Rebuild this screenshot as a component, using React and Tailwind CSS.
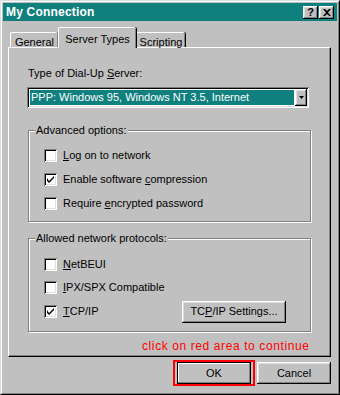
import React from "react";

const raised =
  "shadow-[inset_-1px_-1px_0_#000,inset_1px_1px_0_#fff,inset_-2px_-2px_0_#808080,inset_2px_2px_0_#dfdfdf]";
const sunken =
  "shadow-[inset_1px_1px_0_#808080,inset_-1px_-1px_0_#fff,inset_2px_2px_0_#000,inset_-2px_-2px_0_#dfdfdf]";

const Check = ({ checked, children }) => (
  <div className="flex items-center h-[13px]">
    <div className={`w-[13px] h-[13px] bg-white shrink-0 ${sunken} flex items-center justify-center`}>
      {checked && (
        <svg width="13" height="13" viewBox="0 0 13 13">
          <path d="M3 5v3l2 2 5-5V3L5 8z" fill="#000" />
        </svg>
      )}
    </div>
    <span className="ml-[6px] leading-[13px]">{children}</span>
  </div>
);

const Group = ({ label, className, children }) => (
  <div
    className={`relative ml-[19px] w-[283px] border border-[#808080] shadow-[inset_1px_1px_0_#fff,1px_1px_0_#fff] ${className}`}
  >
    <span className="absolute -top-[7px] left-[6px] bg-[#c0c0c0] px-[1px] leading-[13px]">
      {label}
    </span>
    {children}
  </div>
);

const Tab = ({ active, children, className }) => (
  <div
    className={`relative flex justify-center bg-[#c0c0c0] border-t border-l border-white rounded-t-[2px] shadow-[inset_-1px_0_0_#808080,1px_0_0_#000] ${
      active ? "h-[21px] pt-[3px] z-10 -mb-[1px]" : "h-[15px] pt-[1px]"
    } ${className}`}
  >
    {children}
  </div>
);

export default function App() {
  return (
    <div className="w-[340px] h-[395px] bg-[#c0c0c0] border border-t-[#dfdfdf] border-l-[#dfdfdf] border-r-black border-b-black text-[11px] text-black font-['Liberation_Sans',Arial,sans-serif]">
      <div className="h-full border border-t-white border-l-white border-r-[#808080] border-b-[#808080] p-[1px]">
        <div className="h-[18px] bg-[#0f807d] flex items-center pl-[3px] pr-[3px]">
          <span className="text-white font-bold text-[12px] tracking-[0.2px]">My Connection</span>
          <div className="ml-auto flex gap-[1px]">
            <div className={`w-[15px] h-[13px] bg-[#c0c0c0] ${raised} flex items-center justify-center font-bold text-[11px] leading-none`}>
              ?
            </div>
            <div className={`w-[15px] h-[13px] bg-[#c0c0c0] ${raised} flex items-center justify-center`}>
              <svg width="8" height="7" viewBox="0 0 8 7">
                <path d="M0 0h2l2 2 2-2h2L5 3.5 8 7H6L4 5 2 7H0l3-3.5z" fill="#000" />
              </svg>
            </div>
          </div>
        </div>

        <div className="flex items-end ml-[7px] mt-[7px] h-[19px]">
          <Tab className="w-[48px]">General</Tab>
          <Tab active className="w-[78px]">
            Server Types
          </Tab>
          <Tab className="w-[49px]">Scripting</Tab>
        </div>

        <div className="ml-[5px] w-[323px] h-[310px] border-t border-l border-white border-r border-b border-r-black border-b-black shadow-[inset_-1px_-1px_0_#808080] flex flex-col">
          <div className="ml-[19px] mt-[19px] leading-[13px]">
            Type of Dial-Up <u className="underline-offset-[1px]">S</u>erver:
          </div>
          <div className={`ml-[18px] mt-[7px] w-[282px] h-[21px] bg-white ${sunken} p-[2px] flex`}>
            <div className="flex-1 bg-[#0f807d] text-white border border-white leading-[15px] pl-[1px]">
              PPP: Windows 95, Windows NT 3.5, Internet
            </div>
            <div className={`w-[12px] bg-[#c0c0c0] ${raised} flex items-center justify-center`}>
              <svg width="5" height="3" viewBox="0 0 5 3">
                <path d="M0 0h5L2.5 3z" fill="#000" />
              </svg>
            </div>
          </div>

          <Group label="Advanced options:" className="mt-[22px] h-[92px] pt-[18px] pl-[15px]">
            <div className="flex flex-col gap-[11px]">
              <Check>
                <u className="underline-offset-[1px]">L</u>og on to network
              </Check>
              <Check checked>
                Enable software <u className="underline-offset-[1px]">c</u>ompression
              </Check>
              <Check>
                Require <u className="underline-offset-[1px]">e</u>ncrypted password
              </Check>
            </div>
          </Group>

          <Group label="Allowed network protocols:" className="mt-[16px] h-[94px] pt-[19px] pl-[15px] pr-[24px]">
            <div className="flex flex-col">
              <Check>
                <u className="underline-offset-[1px]">N</u>etBEUI
              </Check>
              <div className="mt-[10px]">
                <Check>
                  <u className="underline-offset-[1px]">I</u>PX/SPX Compatible
                </Check>
              </div>
              <div className="mt-[11px] flex items-center h-[13px]">
                <Check checked>
                  <u className="underline-offset-[1px]">T</u>CP/IP
                </Check>
                <div className={`ml-auto shrink-0 w-[104px] h-[22px] bg-[#c0c0c0] ${raised} flex items-center justify-center`}>
                  TC<u className="underline-offset-[1px]">P</u>/IP Settings...
                </div>
              </div>
            </div>
          </Group>

          <div className="ml-[133px] mt-[7px] text-[#ff0000] text-[12px] leading-[14px] tracking-[0.6px]">
            click on red area to continue
          </div>
        </div>

        <div className="flex justify-end items-center pr-[6px] mt-[3px]">
          <div className="border-2 border-[#ff0000] px-[2px]">
            <div className="w-[74px] h-[22px] bg-[#c0c0c0] border border-black shadow-[inset_-1px_-1px_0_#808080,inset_1px_1px_0_#fff] flex items-center justify-center">
              OK
            </div>
          </div>
          <div className={`ml-[2px] w-[74px] h-[22px] bg-[#c0c0c0] ${raised} flex items-center justify-center`}>
            Cancel
          </div>
        </div>
      </div>
    </div>
  );
}
